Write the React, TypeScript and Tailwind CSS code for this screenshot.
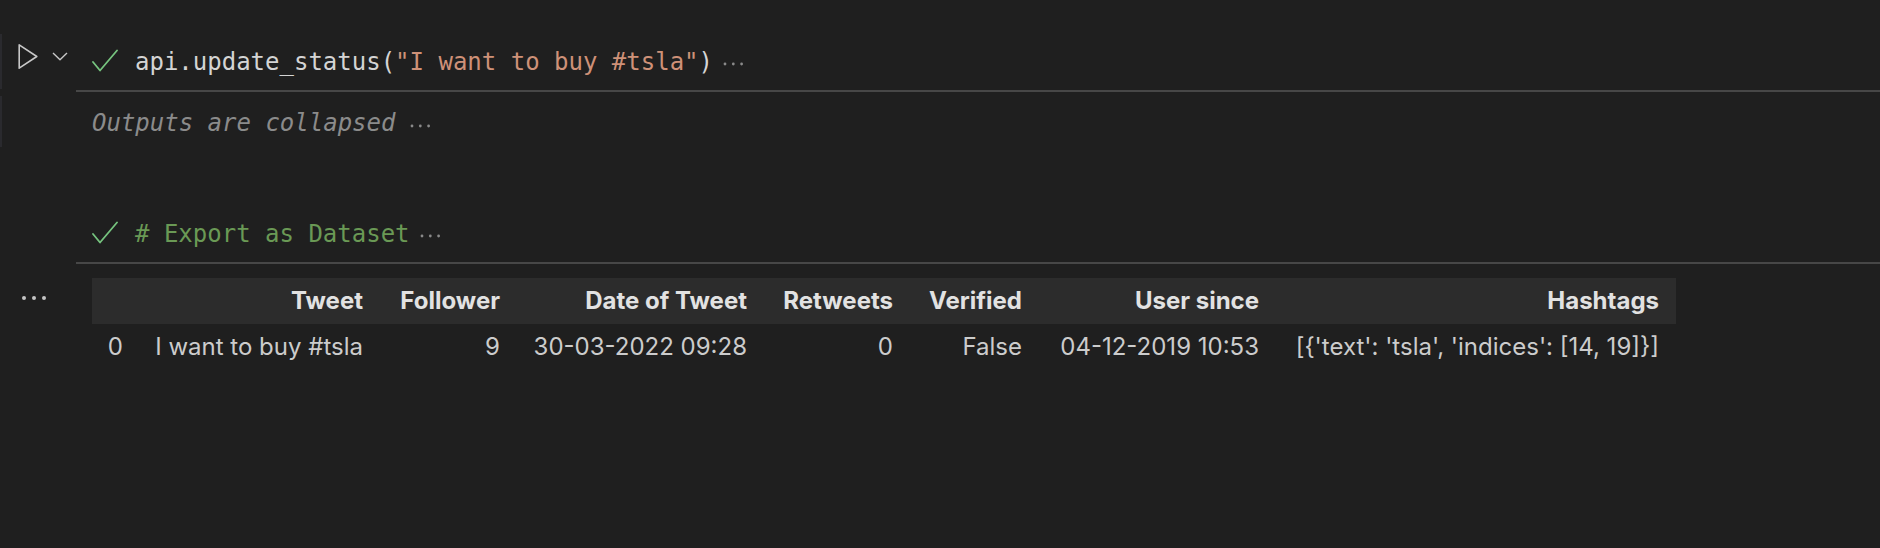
import React from "react";

const mono = { fontFamily: '"DejaVu Sans Mono", Menlo, monospace' };

function Dots({ color = "#8a8a8a" }: { color?: string }) {
  return (
    <svg width="22" height="6" viewBox="0 0 22 6" className="shrink-0">
      <circle cx="3" cy="3" r="1.4" fill={color} />
      <circle cx="11.3" cy="3" r="1.4" fill={color} />
      <circle cx="19.6" cy="3" r="1.4" fill={color} />
    </svg>
  );
}

function Check() {
  return (
    <svg width="26" height="24" viewBox="0 0 26 24" className="shrink-0">
      <polyline
        points="1,13 8,21.5 25,1.5"
        fill="none"
        stroke="#76c47f"
        strokeWidth="1.8"
        strokeLinecap="round"
        strokeLinejoin="round"
      />
    </svg>
  );
}

function CodeRow({ children }: { children: React.ReactNode }) {
  return (
    <div className="flex items-start">
      <div className="ml-[16px] mt-[15px]">
        <Check />
      </div>
      <div
        className="ml-[17px] mt-[10px] flex items-center text-[24px] leading-[36px] whitespace-pre"
        style={mono}
      >
        {children}
        <span className="ml-[9px] mt-[3px] flex items-center">
          <Dots />
        </span>
      </div>
    </div>
  );
}

const cols = [
  { w: "w-[48px]", h: "", v: "0" },
  { w: "w-[240px]", h: "Tweet", v: "I want to buy #tsla" },
  { w: "w-[137px]", h: "Follower", v: "9" },
  { w: "w-[247px]", h: "Date of Tweet", v: "30-03-2022 09:28" },
  { w: "w-[146px]", h: "Retweets", v: "0" },
  { w: "w-[129px]", h: "Verified", v: "False" },
  { w: "w-[237px]", h: "User since", v: "04-12-2019 10:53" },
  { w: "w-[400px]", h: "Hashtags", v: "[{'text': 'tsla', 'indices': [14, 19]}]" },
];

export default function App() {
  return (
    <div className="w-[1880px] h-[548px] overflow-hidden bg-[#1f1f1f] pt-[34px]">
      {/* Cell 1 */}
      <div className="flex flex-col">
        <div className="flex h-[56px]">
          <div className="w-[2px] h-[55px] bg-[#2a2a2e] shrink-0" />
          <div className="w-[74px] shrink-0 flex items-start">
            <svg width="22" height="27" viewBox="0 0 22 27" className="ml-[15px] mt-[9px]">
              <path
                d="M2.2 1.8 L19.8 13.5 L2.2 25.2 Z"
                fill="none"
                stroke="#c8c8c8"
                strokeWidth="1.6"
                strokeLinejoin="round"
              />
            </svg>
            <svg width="16" height="9" viewBox="0 0 16 9" className="ml-[13px] mt-[18px]">
              <polyline
                points="1,1 8,7.8 15,1"
                fill="none"
                stroke="#c8c8c8"
                strokeWidth="1.4"
                strokeLinejoin="round"
              />
            </svg>
          </div>
          <CodeRow>
            <span className="text-[#d4d4d4]">api.update_status(</span>
            <span className="text-[#ce9178]">"I want to buy #tsla"</span>
            <span className="text-[#d4d4d4]">)</span>
          </CodeRow>
        </div>
        <div className="ml-[76px] h-[2px] bg-[#474747]" />
        <div className="flex h-[55px]">
          <div className="w-[2px] mt-[4px] h-[51px] bg-[#2a2a2e] shrink-0" />
          <div
            className="ml-[90px] mt-[7px] flex items-center text-[24px] leading-[36px] italic text-[#8b8b8b] whitespace-pre"
            style={mono}
          >
            Outputs are collapsed
            <span className="ml-[14px] mt-[5px] flex items-center">
              <Dots />
            </span>
          </div>
        </div>
      </div>

      {/* Cell 2 */}
      <div className="flex flex-col mt-[59px]">
        <div className="flex h-[56px]">
          <div className="w-[76px] shrink-0" />
          <CodeRow>
            <span className="text-[#6a9955]"># Export as Dataset</span>
          </CodeRow>
        </div>
        <div className="ml-[76px] h-[2px] bg-[#474747]" />
        <div className="flex">
          <div className="w-[76px] shrink-0 pt-[32px] pl-[22px] flex gap-[6px] items-start">
            <div className="w-[4px] h-[4px] rounded-full bg-[#c4c4c4]" />
            <div className="w-[4px] h-[4px] rounded-full bg-[#c4c4c4]" />
            <div className="w-[4px] h-[4px] rounded-full bg-[#c4c4c4]" />
          </div>
          <div className="ml-[16px] mt-[14px]">
            <table
              className="table-fixed border-collapse w-[1584px] text-[24px]"
              style={{ fontFamily: 'Inter, "Noto Sans", sans-serif' }}
            >
              <colgroup>
                {cols.map((c, i) => (
                  <col key={i} className={c.w} />
                ))}
              </colgroup>
              <thead>
                <tr className="bg-[#2c2c2c]">
                  {cols.map((c, i) => (
                    <th
                      key={i}
                      className="p-0 pr-[17px] text-right font-bold leading-[46px] h-[46px] text-[#e2e2e2] whitespace-nowrap"
                    >
                      {c.h}
                    </th>
                  ))}
                </tr>
              </thead>
              <tbody>
                <tr>
                  {cols.map((c, i) => (
                    <td
                      key={i}
                      className="p-0 pr-[17px] text-right leading-[46px] h-[46px] text-[#cccccc] whitespace-nowrap"
                    >
                      {c.v}
                    </td>
                  ))}
                </tr>
              </tbody>
            </table>
          </div>
        </div>
      </div>
    </div>
  );
}
